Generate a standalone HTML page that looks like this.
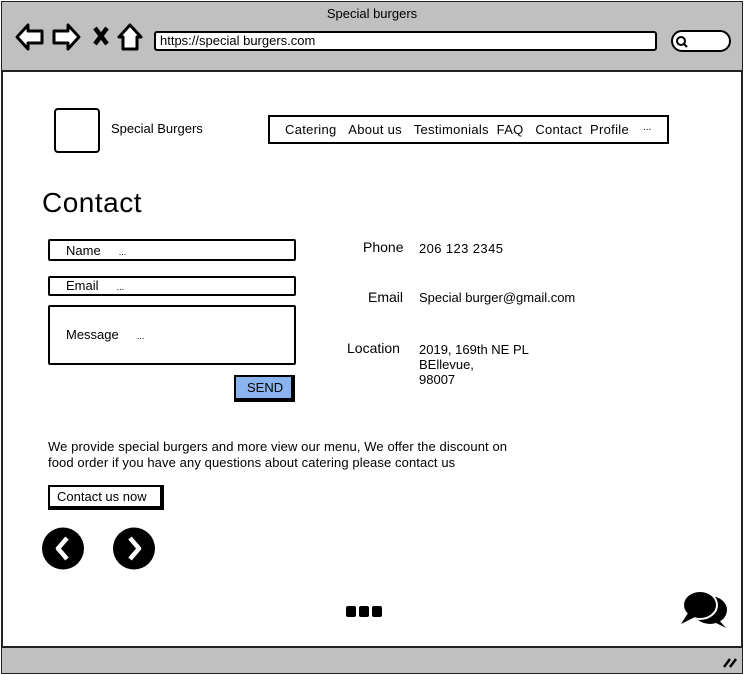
<!DOCTYPE html>
<html><head><meta charset="utf-8"><style>
*{margin:0;padding:0;box-sizing:border-box}
body{width:744px;height:675px;background:#fff;font-family:"Liberation Sans",sans-serif;color:#000;position:relative;overflow:hidden}
.a{position:absolute}
.box{position:absolute;border:2px solid #000;background:#fff;border-radius:2px}
.t{position:absolute;font-size:13px;white-space:nowrap}
</style></head><body>
<div class="a" style="left:1px;top:1px;width:742px;height:673px;border:2px solid #222;background:#fff"></div>
<div class="a" style="left:2px;top:2px;width:740px;height:70px;background:#c0c0c0;border-bottom:2px solid #222"></div>
<div class="t" style="left:0;width:744px;text-align:center;top:6px;font-size:13px">Special burgers</div>
<svg class="a" style="left:14px;top:22px" width="130" height="30" viewBox="0 0 130 30">
<path d="M3 15 L14 3 L14 9 L28 9 L28 21 L14 21 L14 27 Z" fill="#fff" stroke="#000" stroke-width="3" stroke-linejoin="round"/>
<path d="M65 15 L54 3 L54 9 L40 9 L40 21 L54 21 L54 27 Z" fill="#fff" stroke="#000" stroke-width="3" stroke-linejoin="round"/>
<path d="M81 6 L93 22 M93 6 L81 22" stroke="#000" stroke-width="4.5"/>
<path d="M116 3 L105 15 L109 15 L109 27 L123 27 L123 15 L127 15 Z" fill="#fff" stroke="#000" stroke-width="3" stroke-linejoin="round"/>
</svg>
<div class="box" style="left:154px;top:31px;width:503px;height:20px;border-radius:3px"></div>
<div class="t" style="left:160px;top:33px">https://special burgers.com</div>
<div class="box" style="left:671px;top:30px;width:60px;height:22px;border-radius:11px"></div>
<svg class="a" style="left:675px;top:35px" width="14" height="14"><circle cx="6" cy="6" r="4" fill="none" stroke="#000" stroke-width="2"/><path d="M9 9 L12 12" stroke="#000" stroke-width="2"/></svg>

<div class="box" style="left:54px;top:108px;width:46px;height:45px;border-radius:4px"></div>
<div class="t" style="left:111px;top:121px">Special Burgers</div>
<div class="box" style="left:268px;top:115px;width:401px;height:29px;border-radius:0"></div>
<div class="t" style="left:285px;top:122px;letter-spacing:0.3px">Catering&nbsp;&nbsp;&nbsp;About us&nbsp;&nbsp;&nbsp;Testimonials&nbsp; FAQ&nbsp;&nbsp;&nbsp;Contact&nbsp; Profile</div>
<div class="t" style="left:643px;top:122px;font-size:10px">...</div>

<div class="t" style="left:42px;top:187px;font-size:28px;letter-spacing:0.5px">Contact</div>
<div class="box" style="left:48px;top:239px;width:248px;height:22px"></div>
<div class="t" style="left:66px;top:243px">Name&nbsp;&nbsp;&nbsp;&nbsp;&nbsp;<span style="font-size:9px">...</span></div>
<div class="box" style="left:48px;top:276px;width:248px;height:20px"></div>
<div class="t" style="left:66px;top:278px">Email&nbsp;&nbsp;&nbsp;&nbsp;&nbsp;<span style="font-size:9px">...</span></div>
<div class="box" style="left:48px;top:305px;width:248px;height:60px"></div>
<div class="t" style="left:66px;top:327px">Message&nbsp;&nbsp;&nbsp;&nbsp;&nbsp;<span style="font-size:9px">...</span></div>
<div class="a" style="left:234px;top:375px;width:61px;height:27px;background:#8ab4f0;border:2px solid #000;border-right-width:4px;border-bottom-width:4px"></div>
<div class="t" style="left:247px;top:380px">SEND</div>

<div class="t" style="left:363px;top:239px;font-size:14px">Phone</div>
<div class="t" style="left:419px;top:241px;letter-spacing:0.4px">206 123 2345</div>
<div class="t" style="left:368px;top:289px;font-size:14px">Email</div>
<div class="t" style="left:419px;top:290px">Special burger@gmail.com</div>
<div class="t" style="left:347px;top:340px;font-size:14px">Location</div>
<div class="t" style="left:419px;top:342px;line-height:15px">2019, 169th NE PL<br>BEllevue,<br>98007</div>

<div class="t" style="left:48px;top:439px;line-height:16px;letter-spacing:0.1px">We provide special burgers and more view our menu, We offer the discount on<br>food order if you have any questions about catering please contact us</div>
<div class="a" style="left:48px;top:485px;width:116px;height:25px;border:2px solid #000;border-right-width:4px;border-bottom-width:4px"></div>
<div class="t" style="left:57px;top:489px">Contact us now</div>

<svg class="a" style="left:42px;top:527px" width="115" height="44">
<ellipse cx="21" cy="21.5" rx="21" ry="21" fill="#000"/>
<path d="M25 11 L16 21.5 L25 32" stroke="#fff" stroke-width="4.5" fill="none" stroke-linejoin="round"/>
<ellipse cx="92" cy="21.5" rx="21" ry="21" fill="#000"/>
<path d="M88 11 L97 21.5 L88 32" stroke="#fff" stroke-width="4.5" fill="none" stroke-linejoin="round"/>
</svg>
<svg class="a" style="left:346px;top:605px" width="40" height="13">
<rect x="0" y="1" width="10" height="11" rx="2"/><rect x="13" y="1" width="10" height="11" rx="2"/><rect x="26" y="1" width="10" height="11" rx="2"/>
</svg>
<svg class="a" style="left:678px;top:589px" width="52" height="40">
<ellipse cx="32" cy="21" rx="17" ry="14" fill="#000"/>
<path d="M40 30 L48 39 L36 33 Z" fill="#000"/>
<ellipse cx="22" cy="16" rx="17" ry="14" fill="#000" stroke="#fff" stroke-width="2"/>
<path d="M10 24 L3 35 L17 28 Z" fill="#000"/>
</svg>
<div class="a" style="left:2px;top:646px;width:740px;height:27px;background:#c0c0c0;border-top:2px solid #222"></div>
<svg class="a" style="left:722px;top:655px" width="16" height="14"><path d="M2 12 L8 4 M8 12 L14 4" stroke="#000" stroke-width="2.5"/></svg>
</body></html>
